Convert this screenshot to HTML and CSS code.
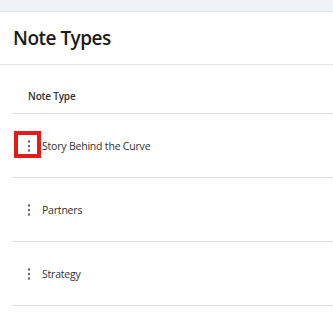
FILE: index.html
```html
<!DOCTYPE html>
<html lang="en">
<head>
    <meta charset="UTF-8">
    <meta name="viewport" content="width=device-width, initial-scale=1.0">
    <title>Note Types</title>
    <link rel="stylesheet" href="styles.css">
</head>
<body>
    <div class="topbar"></div>
    <div class="page_head">
        <h1>Note Types</h1>
    </div>
    <div class="list">
        <div class="list_head">Note Type</div>
        <div class="row">
            <span class="more marked">
                <svg width="6" height="14" viewBox="0 0 6 14"><circle cx="3" cy="2.5" r="1.2"/><circle cx="3" cy="7" r="1.2"/><circle cx="3" cy="11.5" r="1.2"/></svg>
            </span>
            <span class="name">Story Behind the Curve</span>
        </div>
        <div class="row">
            <span class="more">
                <svg width="6" height="14" viewBox="0 0 6 14"><circle cx="3" cy="2.5" r="1.2"/><circle cx="3" cy="7" r="1.2"/><circle cx="3" cy="11.5" r="1.2"/></svg>
            </span>
            <span class="name">Partners</span>
        </div>
        <div class="row">
            <span class="more">
                <svg width="6" height="14" viewBox="0 0 6 14"><circle cx="3" cy="2.5" r="1.2"/><circle cx="3" cy="7" r="1.2"/><circle cx="3" cy="11.5" r="1.2"/></svg>
            </span>
            <span class="name">Strategy</span>
        </div>
    </div>
</body>
</html>
```
FILE: styles.css
```css
*, *::after{
    box-sizing: border-box;
    font-family: "Open Sans", sans-serif;
}
body{
    margin: 0;
    padding: 0;
    background-color: #ffffff;
    color: #323130;
}
.topbar{
    height: 12px;
    background-color: #eff2f7;
    border-bottom: 1px solid #dfe2e7;
}
.page_head{
    height: 53px;
    padding-left: 13px;
    border-bottom: 1px solid #e3e3e3;
    display: flex;
    align-items: center;
}
.page_head h1{
    margin: 0;
    font-size: 19px;
    font-weight: 600;
    letter-spacing: -0.5px;
    color: #1b1b1b;
    line-height: 24px;
}
.list{
    margin-left: 12px;
}
.list_head{
    height: 49px;
    padding: 23px 0px 9px 16px;
    font-size: 10px;
    font-weight: 600;
    letter-spacing: -0.2px;
    line-height: 16px;
    border-bottom: 1px solid #e3e3e3;
}
.row{
    height: 64px;
    display: flex;
    align-items: center;
    padding-left: 14px;
    border-bottom: 1px solid #e3e3e3;
}
.row .more{
    width: 6px;
    height: 14px;
    margin-right: 10px;
    position: relative;
}
.row .more svg{
    display: block;
    fill: #6b6967;
}
.row .more.marked::after{
    content: "";
    position: absolute;
    left: -12px;
    top: -8px;
    width: 27px;
    height: 27px;
    border: 4px solid #e31b1b;
}
.row .name{
    font-size: 10.5px;
    letter-spacing: -0.2px;
    line-height: 16px;
}
```
